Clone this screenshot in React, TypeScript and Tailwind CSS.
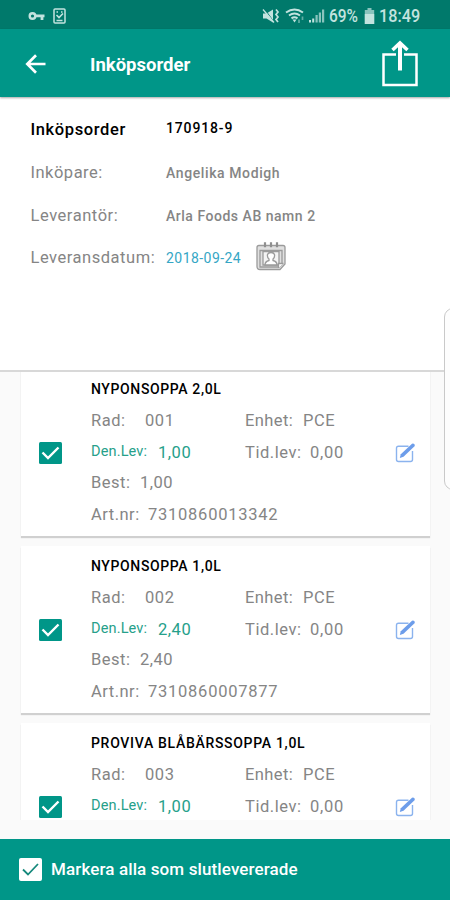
import React from "react";

type Item = { name: string; nameTracking: string; row: string; delivered: string; ordered?: string; art?: string };

const items: Item[] = [
  { name: "NYPONSOPPA 2,0L", nameTracking: "tracking-[0.620px]", row: "001", delivered: "1,00", ordered: "1,00", art: "7310860013342" },
  { name: "NYPONSOPPA 1,0L", nameTracking: "tracking-[0.620px]", row: "002", delivered: "2,40", ordered: "2,40", art: "7310860007877" },
  { name: "PROVIVA BLÅBÄRSSOPPA 1,0L", nameTracking: "tracking-[0.690px]", row: "003", delivered: "1,00" },
];

function StatusBar() {
  return (
    <div className="flex h-[29px] shrink-0 items-center bg-[#00796b] pt-[2px] text-[#c3e3df]">
      <svg className="ml-[28px] h-[10px] w-[18px]" viewBox="0 0 18 10" fill="none" stroke="currentColor">
        <circle cx="4.5" cy="5" r="2.800" strokeWidth="2.400" />
        <path d="M8 4.800h8.500M14 5v4" strokeWidth="2.800" />
      </svg>
      <svg className="ml-[7px] h-[16px] w-[13px]" viewBox="0 0 13 16" fill="none" stroke="currentColor">
        <rect x="1" y="1" width="11" height="14" rx="1" strokeWidth="1.500" />
        <path d="M3.500 4h1.500M8 4h1.500M3.500 12.500h6" strokeWidth="1.300" />
        <path d="M3.500 7l2.500 2.500 4-4" strokeWidth="1.600" />
      </svg>
      <svg className="ml-[196px] h-[16px] w-[18px]" viewBox="0 0 18 16" fill="currentColor">
        <path d="M1 5.500h3.500L11 1.500v13L4.500 10.500H1z" />
        <path d="M2.500 1l10 13.500" stroke="#00796b" strokeWidth="1" />
        <path d="M1 1.500l11 13" stroke="currentColor" strokeWidth="1.300" />
        <path d="M14 1.500l2 2.500-2 2.500L16 9l-2 2.500L16 14" fill="none" stroke="currentColor" strokeWidth="1.700" />
      </svg>
      <svg className="ml-[5px] h-[16px] w-[22px]" viewBox="0 0 22 16" fill="none" stroke="currentColor">
        <path d="M1 4.500Q9.500-1.500 18 4.500M4 7.500Q9.500 3.500 15 7.500M6.500 10.300Q9.500 8.300 12.500 10.300" strokeWidth="2" />
        <path d="M7.500 11.500h4L9.500 14.500z" fill="currentColor" stroke="none" />
        <path d="M14 11.500v3.500M17.500 8.500v3.500" strokeWidth="1.700" opacity=".5" />
      </svg>
      <svg className="ml-[1px] h-[16px] w-[17px]" viewBox="0 0 17 16" fill="currentColor">
        <path d="M1 12h2v2.500H1zM4.200 10.500h2v4h-2z" />
        <path d="M7.500 7h2.200v7.500H7.500zM10.800 4.500H13v10h-2.200zM14 1.500h2.200v13H14z" opacity=".7" />
      </svg>
      <span className="ml-[4px] w-[31px] whitespace-nowrap text-[18px] font-medium leading-[20px]">
        <span className="inline-block origin-left scale-x-[0.86]">69%</span>
      </span>
      <svg className="ml-[4px] h-[16px] w-[11px]" viewBox="0 0 11 16" fill="currentColor">
        <path d="M3.500 0h4v2h2.700v14H.8V2h2.700z" opacity=".7" />
        <path d="M.8 6h9.400v10H.8z" />
      </svg>
      <span className="ml-[4px] w-[43px] whitespace-nowrap text-[18px] font-medium leading-[20px]">
        <span className="inline-block origin-left scale-x-[0.9]">18:49</span>
      </span>
    </div>
  );
}

function Toolbar() {
  return (
    <div className="relative z-10 flex h-[68px] shrink-0 items-center bg-[#009688] text-white shadow-[0_1px_2px_rgba(0,0,0,0.35)]">
      <svg className="ml-[25px] mt-[1px] h-[20px] w-[22px]" viewBox="0 0 22 20" fill="none" stroke="currentColor" strokeWidth="2.700">
        <path d="M20.500 10H2.500M11 1.300L2.300 10l8.700 8.700" />
      </svg>
      <h1 className="ml-[43px] mt-[3px] whitespace-nowrap text-[18.500px] font-bold leading-[22px]">Inköpsorder</h1>
      <svg className="ml-auto mr-[32px] h-[47px] w-[36px]" viewBox="0 0 36 47" fill="none" stroke="currentColor">
        <path d="M14 14.500H1.500v30.500h33V14.500H22" strokeWidth="2.500" />
        <path d="M18 30.500V4" strokeWidth="4" />
        <path d="M10.500 10L18 3l7.500 7" strokeWidth="3.500" />
      </svg>
    </div>
  );
}

function CalendarIcon() {
  return (
    <svg className="mb-[4px] ml-[14px] h-[30px] w-[30px]" viewBox="0 0 30 30" fill="none" stroke="#9b9b9b" strokeWidth="1.300">
      <path d="M3 4.500h24q2 0 2 2V23l-5 5.500H4q-3 0-3-3v-19q0-2 2-2z" fill="#e0e0e0" />
      <path d="M4 9.500h22v14l-3 2.500H4z" />
      <path d="M9 1.200v5M15 1.200v5M21 1.200v5" stroke="#8f8f8f" strokeWidth="2.200" />
      <path d="M7 10.500h16v13.500H7z" fill="#f4f4f4" />
      <path d="M9 24q0-3.500 4-4.500v-1.500q-2-1.500-1.500-4.500.7-2 3.500-2t3.500 2q.5 3-1.500 4.500v1.500q4 1 4 4.500zM22.500 27v-4.500h5" fill="#fff" />
    </svg>
  );
}

function InfoPanel() {
  return (
    <section className="flex h-[275px] shrink-0 flex-col border-b-2 border-[#d8d8d8] bg-white pl-[30.500px] pt-[12px] text-[#858585]">
      <div className="flex h-[42px] items-center whitespace-nowrap text-black">
        <span className="w-[135.500px] text-[16.500px] font-medium tracking-[0.620px]">Inköpsorder</span>
        <span className="mb-[3px] text-[14px] font-medium tracking-[0.850px]">170918-9</span>
      </div>
      <div className="flex h-[44px] items-center whitespace-nowrap">
        <span className="w-[135.500px] text-[16.500px] tracking-[0.500px]">Inköpare:</span>
        <span className="text-[14px] font-medium tracking-[0.600px]">Angelika Modigh</span>
      </div>
      <div className="flex h-[42px] items-center whitespace-nowrap">
        <span className="w-[135.500px] text-[16.500px] tracking-[0.550px]">Leverantör:</span>
        <span className="text-[14px] font-medium tracking-[0.520px]">Arla Foods AB namn 2</span>
      </div>
      <div className="flex h-[42px] items-center whitespace-nowrap">
        <span className="w-[135.500px] text-[16.500px] tracking-[0.530px]">Leveransdatum:</span>
        <span className="w-[76px] text-[14px] tracking-[0.450px] text-[#35a6c5]">2018-09-24</span>
        <CalendarIcon />
      </div>
    </section>
  );
}

function CheckBox() {
  return (
    <svg className="h-[22px] w-[23px]" viewBox="0 0 23 22" fill="none">
      <rect width="23" height="22" rx="1.500" fill="#009688" />
      <path d="M3.500 10.500l5.500 5.500L19.500 5.500" stroke="#fff" strokeWidth="2.400" />
    </svg>
  );
}

function EditIcon() {
  return (
    <svg className="h-[20px] w-[21px]" viewBox="0 0 21 20" fill="none">
      <path d="M13.500 3.300H3.500q-2 0-2 2v11.200q0 2 2 2h12q2 0 2-2V8" stroke="#8bb3ee" strokeWidth="1.400" />
      <path d="M4.800 15l1-3.800L17 .8q1.500-.7 2.500.7L19.800 3 8.500 13.800z" fill="#6d9dea" />
    </svg>
  );
}

function Card({ item }: { item: Item }) {
  return (
    <article className="mb-[10px] flex h-[167px] shrink-0 bg-white text-[16.500px] text-[#858585] shadow-[0_2px_1px_rgba(0,0,0,0.17)]">
      <div className="flex w-[70px] shrink-0 items-center pl-[18px]"><CheckBox /></div>
      <div className="flex w-[284px] shrink-0 flex-col whitespace-nowrap pt-[5px]">
        <h2 className={`flex h-[30px] items-center text-[14px] font-medium text-black ${item.nameTracking}`}>{item.name}</h2>
        <div className="flex h-[34px] items-center tracking-[0.550px]">
          <span className="w-[54px]">Rad:</span>
          <span className="w-[100px]">{item.row}</span>
          <span className="w-[58px] tracking-[0.400px]">Enhet:</span>
          <span>PCE</span>
        </div>
        <div className="flex h-[31px] items-center tracking-[0.550px]">
          <span className="mb-[3px] w-[67px] text-[14.500px] tracking-[0.150px] text-[#26a08a]">Den.Lev:</span>
          <span className="w-[87px] text-[#26a08a]">{item.delivered}</span>
          <span className="w-[65px]">Tid.lev:</span>
          <span className="tracking-[0.750px]">0,00</span>
        </div>
        {item.ordered && (
          <div className="flex h-[28px] items-center tracking-[0.500px]">
            <span className="w-[49px]">Best:</span>
            <span>{item.ordered}</span>
          </div>
        )}
        {item.art && (
          <div className="flex h-[37px] items-center tracking-[0.750px]">
            <span className="w-[57px] tracking-[0.500px]">Art.nr:</span>
            <span>{item.art}</span>
          </div>
        )}
      </div>
      <div className="flex flex-1 items-center pl-[20px]"><EditIcon /></div>
    </article>
  );
}

export default function App() {
  return (
    <main className="relative flex h-[900px] w-[450px] flex-col overflow-hidden bg-[#fafafa] font-[Roboto,sans-serif]">
      <StatusBar />
      <Toolbar />
      <InfoPanel />
      <div className="h-[448px] shrink-0 overflow-hidden pl-[21px] pr-[20px]">
        <div className="-mt-[3px] flex flex-col">
          {items.map((item) => <Card key={item.row} item={item} />)}
        </div>
      </div>
      <footer className="mt-auto flex h-[61px] shrink-0 items-center bg-[#009688] pl-[19px] text-white">
        <svg className="h-[23px] w-[23px]" viewBox="0 0 23 23" fill="none">
          <rect width="23" height="23" rx="2" fill="#fff" />
          <path d="M4 11.500l5 5L19 6" stroke="#16897c" strokeWidth="1.800" />
        </svg>
        <span className="ml-[9px] mt-[1px] whitespace-nowrap text-[17px] font-medium tracking-[0.120px]">Markera alla som slutlevererade</span>
      </footer>
      <div className="absolute left-[444px] top-[308px] h-[182px] w-[20px] rounded-[9px] border border-[#c9c9c9] bg-[#fdfdfd]" />
    </main>
  );
}
